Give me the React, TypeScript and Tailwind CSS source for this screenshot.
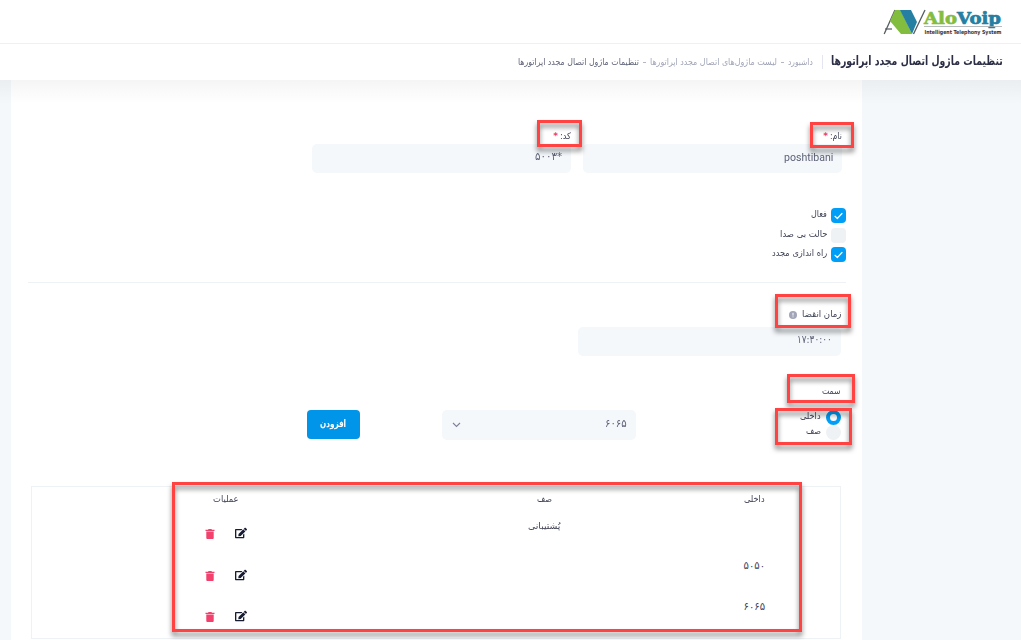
import { useLayoutEffect, useRef, useState } from "react";
import { FaEdit } from "react-icons/fa";

/* Text squeezed or stretched horizontally to a given width. */
function T({ w, className = "", children }: { w: number; className?: string; children: string }) {
  const ref = useRef<HTMLSpanElement>(null);
  const [scale, setScale] = useState(1);
  useLayoutEffect(() => {
    if (ref.current) setScale(w / ref.current.offsetWidth);
  }, [w]);
  return (
    <span className={"flex h-4 shrink-0 items-center leading-4 " + className} style={{ width: w }}>
      <span ref={ref} className="inline-block origin-right whitespace-nowrap" style={{ transform: `scaleX(${scale})` }}>
        {children}
      </span>
    </span>
  );
}

function Logo() {
  return (
    <svg width="122" height="32" viewBox="0 0 122 32" direction="ltr" className="-ml-0.5 block">
      <path d="M3.200 26 L14 2" stroke="#555b60" strokeWidth="1.3" />
      <path d="M4 21 H11" stroke="#555b60" strokeWidth="1.2" />
      <path d="M14 2 H19.500 L31 26 H20 L9 13 Z" fill="#83bd3f" />
      <path d="M19 2 H30 L36 14 L31 26 Z" fill="#247fa3" />
      <path d="M32.500 26 L44 2" stroke="#555b60" strokeWidth="1.3" />
      <g fontFamily="'DejaVu Serif', serif" fontWeight="700" fontSize="16.5" strokeWidth="0.7">
        <text x="43" y="15.500" textLength="33" lengthAdjust="spacingAndGlyphs" fill="#83bd3f" stroke="#83bd3f">Alo</text>
        <text x="76" y="15.500" textLength="44" lengthAdjust="spacingAndGlyphs" fill="#247fa3" stroke="#247fa3">Voip</text>
      </g>
      <path d="M43 18.500 H121" stroke="#a6a9ab" strokeWidth="0.8" />
      <text x="43.500" y="25.500" textLength="77" lengthAdjust="spacingAndGlyphs" fontFamily="'DejaVu Sans', sans-serif" fontWeight="700" fontSize="5.5" fill="#333">
        Intelligent Telephony System
      </text>
    </svg>
  );
}

function Trash() {
  return (
    <svg width="10" height="10" viewBox="0 0 10 10" className="mt-0.5" fill="#f1416c">
      <path d="M0.500 0.700 H3.300 V0 H6.700 V0.700 H9.500 V2 H0.500 Z M1.300 2.600 H8.700 V9 Q8.700 10 7.700 10 H2.300 Q1.300 10 1.300 9 Z" />
    </svg>
  );
}

function Mark({ className }: { className: string }) {
  return (
    <div
      className={
        "pointer-events-none absolute border-3 border-[#ff4242] drop-shadow-[0px_4px_2.5px_rgba(0,0,0,0.5)] " + className
      }
    />
  );
}

function Check({ on, label, w }: { on: boolean; label: string; w: number }) {
  return (
    <label className="flex h-[19.5px] items-start gap-1">
      <span className={"flex size-[15px] items-center justify-center rounded-[4px] " + (on ? "bg-[#009ef7]" : "bg-[#eff2f5]")}>
        {on && (
          <svg width="9" height="8" viewBox="0 0 9 8" fill="none">
            <path d="M1 4.300 L3.300 6.500 L8 1.500" stroke="#fff" strokeWidth="1.2" strokeLinecap="round" strokeLinejoin="round" />
          </svg>
        )}
      </span>
      <T w={w} className="-mt-0.5 text-[9px]">{label}</T>
    </label>
  );
}

const rows = [
  { ext: "", queue: "پُشتیبانی", h: "h-[42px]" },
  { ext: "۵۰۵۰", queue: "", h: "h-[41px]" },
  { ext: "۶۰۶۵", queue: "", h: "h-[41px]" },
];

export default function App() {
  return (
    <div dir="rtl" className="relative flex h-[640px] w-[1021px] flex-col overflow-hidden bg-[#f4f8fb] font-['DejaVu_Sans',sans-serif] text-[9px] text-[#3f4254]">
      <header className="flex h-11 shrink-0 items-start border-b border-[#eff0f2] bg-white pr-[18px] pt-2">
        <Logo />
      </header>
      <div className="flex h-9 shrink-0 items-center bg-white pr-[18px]">
        <T w={172} className="-mt-0.5 text-[12.5px] font-bold text-[#2b2e45]">تنظیمات ماژول اتصال مجدد اپراتورها</T>
        <span className="mr-[8px] h-3.5 w-px bg-[#e4e6ef]" />
        <T w={25} className="mr-[9px] text-[#a1a5b7]">داشبورد</T>
        <span className="mx-1 h-px w-[3px] bg-[#b5b5c3]" />
        <T w={127} className="text-[#a1a5b7]">لیست ماژول‌های اتصال مجدد اپراتورها</T>
        <span className="mx-1 h-px w-[3px] bg-[#b5b5c3]" />
        <T w={121} className="text-[#5e6278]">تنظیمات ماژول اتصال مجدد اپراتورها</T>
      </div>

      <main className="mr-[159px] flex h-[560px] w-[851px] flex-col bg-white pl-[17px] pr-5">
        <div className="mt-12 flex gap-3">
          <div className="w-[259px]">
            <div className="flex h-4 items-center gap-0.5">
              <T w={12}>نام:</T>
              <T w={5} className="font-bold text-[#f1416c]">*</T>
            </div>
            <div className="flex h-[29px] items-start rounded-[5px] bg-[#f4f8fb] pr-[9px] pt-[6px] text-[#5e6278]">
              <T w={49} className="font-['Roboto',sans-serif] text-[11px]">poshtibani</T>
            </div>
          </div>
          <div className="w-[259px]">
            <div className="flex h-4 items-center gap-0.5">
              <T w={11}>کد:</T>
              <T w={5} className="font-bold text-[#f1416c]">*</T>
            </div>
            <div className="flex h-[29px] items-start rounded-[5px] bg-[#f4f8fb] pr-[9px] pt-[5px] text-[#5e6278]">
              <T w={27} className="text-[11px]">*۵۰۰۳</T>
            </div>
          </div>
        </div>

        <div className="-mr-1 mt-[35px] flex h-[74px] flex-col">
          <Check on label="فعال" w={16} />
          <Check on={false} label="حالت بی صدا" w={47} />
          <Check on label="راه اندازی مجدد" w={55} />
        </div>

        <div className="-mr-1 h-px shrink-0 bg-[#eff2f5]" />

        <div className="mr-px mt-[23px] flex h-[21px] items-start gap-[5px]">
          <T w={39}>زمان انقضا</T>
          <svg width="8" height="8" viewBox="0 0 8 8" className="mt-[5px]">
            <circle cx="4" cy="4" r="4" fill="#a1a5b7" />
            <path d="M4 1.800 V4.600 M4 5.400 V6.300" stroke="#fff" />
          </svg>
        </div>
        <div className="mr-px flex h-[29px] w-[263px] items-start rounded-[5px] bg-[#f4f8fb] pr-[9px] pt-[5px] text-[#5e6278]">
          <T w={35} className="text-[11px]">۱۷:۳۰:۰۰</T>
        </div>

        <div className="mr-px mt-[27px] flex h-[27px]">
          <T w={19}>سمت</T>
        </div>
        <div className="mr-px flex h-[76px] items-start">
          <div className="flex w-[205px] flex-col">
            <label className="flex h-[15px] gap-[5px]">
              <span className="size-[15px] shrink-0 rounded-full border-4 border-[#009ef7] bg-white" />
              <T w={21} className="-mt-[2px]">داخلی</T>
            </label>
            <label className="flex h-[15px] gap-[5px]">
              <span className="size-[15px] shrink-0 rounded-full bg-[#eff2f5]" />
              <T w={15} className="-mt-[2px]">صف</T>
            </label>
          </div>
          <div className="flex h-[30px] w-[194px] items-start justify-between rounded-[5px] bg-[#f4f8fb] pl-[10px] pr-[9px] pt-[6px] text-[#5e6278]">
            <T w={22} className="text-[11px]">۶۰۶۵</T>
            <svg width="9" height="6" viewBox="0 0 9 6" className="mt-[6px]" fill="none">
              <path d="M1 1 L4.500 4.500 L8 1" stroke="#7e8299" strokeWidth="1.1" />
            </svg>
          </div>
          <button className="mr-[82px] flex h-[29px] w-[53px] justify-center rounded-[4px] bg-[#0095e8] pt-[6px] text-white">
            <T w={26} className="text-[10px] font-bold">افزودن</T>
          </button>
        </div>

        <div className="ml-[3px] mr-px h-[153px] shrink-0 border border-[#eff2f5] pt-1">
          <div className="flex h-[22px]">
            <div className="w-[279px] pr-[75px]"><T w={21}>داخلی</T></div>
            <div className="w-[314px] pr-[9px]"><T w={15}>صف</T></div>
            <div className="pr-[9px]"><T w={25}>عملیات</T></div>
          </div>
          {rows.map((r) => (
            <div key={r.ext + r.queue} className={"flex " + r.h}>
              <div className="w-[279px] pr-[75px] pt-[3px]">{r.ext && <T w={21} className="text-[10px]">{r.ext}</T>}</div>
              <div className="w-[314px] pr-px pt-[5px]">{r.queue && <T w={32}>{r.queue}</T>}</div>
              <div className="flex gap-5 pt-[14px]">
                <FaEdit className="size-3 text-[#181c32]" />
                <Trash />
              </div>
            </div>
          ))}
        </div>
      </main>

      <div className="pointer-events-none absolute inset-x-0 top-20 h-6 bg-linear-to-b from-black/4 to-transparent" />
      <Mark className="left-[537px] top-[120px] h-[27px] w-[45px]" />
      <Mark className="left-[810px] top-[122px] h-[26px] w-[44px]" />
      <Mark className="left-[775px] top-[294px] h-[34px] w-[76px]" />
      <Mark className="left-[787px] top-[374px] h-[29px] w-[68px]" />
      <Mark className="left-[775px] top-[408px] h-[37px] w-[77px]" />
      <Mark className="left-[172px] top-[482px] h-[150px] w-[630px]" />
    </div>
  );
}
